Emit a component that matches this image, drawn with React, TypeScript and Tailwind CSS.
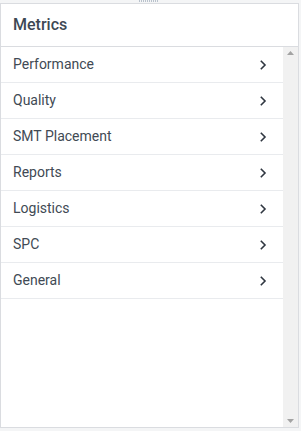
import React from "react";

const items = [
  "Performance",
  "Quality",
  "SMT Placement",
  "Reports",
  "Logistics",
  "SPC",
  "General",
];

const Chevron: React.FC = () => (
  <svg width="8" height="12" viewBox="0 0 8 12" className="text-[#2f3640]">
    <path d="M1.8 1.8 L6 6 L1.8 10.2" fill="none" stroke="currentColor" strokeWidth="1.6" />
  </svg>
);

export default function App() {
  return (
    <div
      className="w-[301px] h-[431px] bg-[#f4f5f6] flex flex-col relative"
      style={{ fontFamily: "Roboto, 'Liberation Sans', sans-serif" }}
    >
      {/* resize handle */}
      <div className="absolute top-0 left-[139px] flex gap-[1px]">
        {Array.from({ length: 10 }).map((_, i) => (
          <div key={i} className="w-[1px] h-[2px] bg-[#b9c2cc]" />
        ))}
      </div>
      <div className="mt-[3px] w-[299px] h-[425px] border border-[#dadce0] bg-white flex flex-col">
        <div className="h-[43px] shrink-0 border-b border-[#dadce0] flex items-center px-3">
          <span className="text-[16px] font-medium text-[#3d4853]">Metrics</span>
        </div>
        <div className="flex flex-1 min-h-0">
          <div className="flex-1 flex flex-col">
            {items.map((label) => (
              <div
                key={label}
                className="h-[36px] border-b border-[#e9ebee] flex items-center justify-between pl-3 pr-[16px]"
              >
                <span className="text-[14px] text-[#414a54]">{label}</span>
                <Chevron />
              </div>
            ))}
          </div>
          <div className="w-[15px] bg-[#f1f1f1] flex flex-col items-center justify-between py-[4px]">
            <svg width="7" height="4" viewBox="0 0 7 4">
              <path d="M0 4 L3.5 0 L7 4 Z" fill="#a3a3a3" />
            </svg>
            <svg width="7" height="4" viewBox="0 0 7 4">
              <path d="M0 0 L3.5 4 L7 0 Z" fill="#a3a3a3" />
            </svg>
          </div>
        </div>
      </div>
    </div>
  );
}
